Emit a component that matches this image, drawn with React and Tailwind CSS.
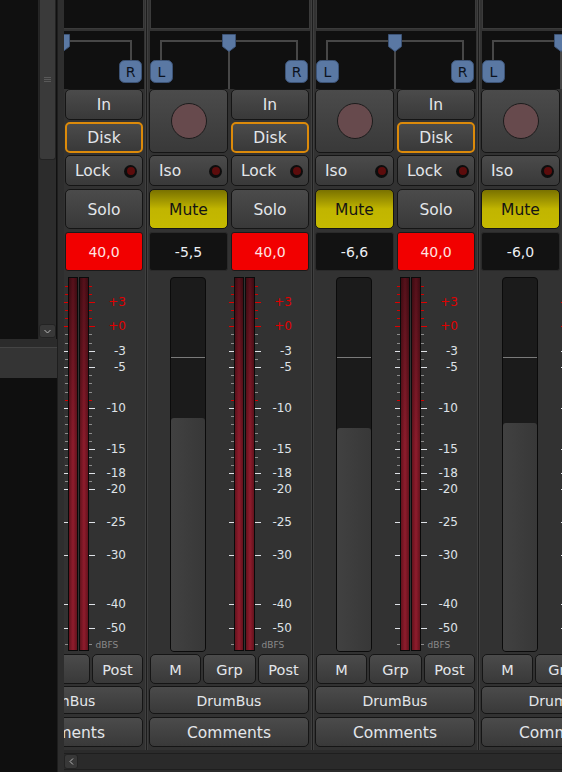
import React from 'react';

// mixer strips; strip 1 is scrolled so only its right half shows
const STRIPS = [
  { gain: '-3,0', fill: 418, grp: '' },
  { gain: '-5,5', fill: 418, grp: 'Grp' },
  { gain: '-6,6', fill: 428, grp: 'Grp' },
  { gain: '-6,0', fill: 423, grp: 'Grp' },
];

const MINOR = [286, 294, 310, 318, 334, 343, 359, 375, 383, 392, 400, 416, 424, 433, 441, 457, 465, 481, 644];
const RED_MINOR = [286, 294, 310, 318, 400];
const LABELS = [
  [302, '+3', true], [326, '+0', true], [351, '-3'], [367, '-5'], [408, '-10'], [449, '-15'],
  [473, '-18'], [489, '-20'], [522, '-25'], [555, '-30'], [604, '-40'], [628, '-50'],
];

const Btn = ({ children, className = '' }) => (
  <div className={`flex items-center justify-center rounded-[5px] border border-[#151515] bg-linear-to-b from-[#4b4b4b] to-[#393939] pt-[3px] text-[#e3e6ea] ${className}`}>
    {children}
  </div>
);

const Led = () => (
  <div className="-mt-[2px] flex h-[13px] w-[13px] items-center justify-center rounded-full bg-[#0d0d0d]">
    <div className="h-[8px] w-[8px] rounded-full bg-[#5c0c0c]" />
  </div>
);

const Panner = () => (
  <svg width="160" height="58" className="block">
    <rect width="160" height="58" fill="#101010" />
    <path d="M11 30 V10 H147 V30" stroke="#474747" strokeWidth="2" fill="none" />
    <path d="M79 18 V58" stroke="#474747" strokeWidth="2" />
    <path d="M72.5 3.5 H85.5 V15.5 L79 20.5 L72.5 15.5 Z" fill="#5a78a3" stroke="#3c5376" />
    <rect x="0.5" y="29.5" width="22" height="22" rx="5" fill="#5a78a3" stroke="#3c5376" />
    <text x="11.5" y="41" textAnchor="middle" dominantBaseline="central" fontSize="14" fill="#0c1320" fontFamily="DejaVu Sans, sans-serif">L</text>
    <rect x="135.5" y="29.5" width="22" height="22" rx="5" fill="#5a78a3" stroke="#3c5376" />
    <text x="146.5" y="41" textAnchor="middle" dominantBaseline="central" fontSize="14" fill="#0c1320" fontFamily="DejaVu Sans, sans-serif">R</text>
  </svg>
);

const Meter = () => {
  const y = (v) => v - 277 + 0.5;
  return (
    <svg width="72" height="375" className="block shrink-0">
      <defs>
        <linearGradient id="mh" x1="0" x2="1" y1="0" y2="0">
          <stop offset="0" stopColor="#5e111a" />
          <stop offset="0.5" stopColor="#8f1c2d" />
          <stop offset="1" stopColor="#5e111a" />
        </linearGradient>
        <linearGradient id="mv" x1="0" x2="0" y1="0" y2="1">
          <stop offset="0" stopColor="#000" stopOpacity="0.4" />
          <stop offset="0.45" stopColor="#000" stopOpacity="0" />
        </linearGradient>
      </defs>
      {[6.5, 17.5].map((x) => (
        <g key={x}>
          <rect x={x} y="0.5" width="9" height="373" fill="url(#mh)" stroke="#0a0a0a" />
          <rect x={x + 0.5} y="1" width="8" height="372" fill="url(#mv)" />
        </g>
      ))}
      {MINOR.map((v) => {
        const c = RED_MINOR.includes(v) ? '#d40000' : '#8c8c8c';
        return (
          <g key={v} stroke={c}>
            <path d={`M3 ${y(v)} H6`} />
            <path d={`M27 ${y(v)} H30`} />
          </g>
        );
      })}
      {LABELS.map(([v, t, red]) => {
        const c = red ? '#e00000' : '#dfe2e7';
        return (
          <g key={v}>
            <path d={`M1 ${y(v)} H6`} stroke={c} />
            <path d={`M27 ${y(v)} H33`} stroke={c} />
            <text x="64" y={v - 277} textAnchor="end" dominantBaseline="central" fontSize="12" fill={c} fontFamily="DejaVu Sans, sans-serif">{t}</text>
          </g>
        );
      })}
      <text x="33.5" y="368" dominantBaseline="central" fontSize="9" fill="#8a8a8a" fontFamily="DejaVu Sans, sans-serif">dBFS</text>
    </svg>
  );
};

const Fader = ({ fill }) => (
  <div className="flex h-[375px] w-[36px] shrink-0 flex-col overflow-hidden rounded-[4px] border border-[#0b0b0b] bg-[#1b1b1b]">
    <div className="h-[79px] shrink-0" />
    <div className="h-px shrink-0 bg-[#7a7a7a]" />
    <div className="flex-1" />
    <div className="shrink-0 rounded-t-[3px] bg-linear-to-r from-[#414141] to-[#383838]" style={{ height: 651 - fill }} />
  </div>
);

const Strip = ({ gain, fill, grp }) => (
  <div className="flex w-[166px] shrink-0 border-l border-l-[#1d1d1d]">
    <div className="flex h-[750px] w-[165px] flex-col border-x border-[#3f3f3f] bg-[#323232]">
      <div className="ml-[2px] h-[29px] w-[160px] shrink-0 border-x border-b border-[#3b3b3b] bg-[#101010]" />
      <div className="ml-[2px] mt-[2px] shrink-0">
        <Panner />
      </div>

      <div className="grid shrink-0 grid-cols-[79px_78px] gap-x-[3px] pl-[1px] text-[15.5px]">
        <Btn className="row-span-2 h-[64px] pt-0!">
          <div className="h-[36px] w-[36px] rounded-full border border-[#1c1c1c] bg-[#674a4d]" />
        </Btn>
        <Btn className="h-[31px]">In</Btn>
        <div className="mt-[2px] flex h-[31px] items-center justify-center rounded-[5px] border-2 border-[#dc8a0a] bg-linear-to-b from-[#4b4b4b] to-[#393939] pt-[2px] text-[#e3e6ea]">
          Disk
        </div>

        <Btn className="mt-[2px] h-[31px] justify-between! pl-[9px] pr-[5px]">
          <span>Iso</span>
          <Led />
        </Btn>
        <Btn className="mt-[2px] h-[31px] justify-between! pl-[9px] pr-[5px]">
          <span>Lock</span>
          <Led />
        </Btn>

        <div className="mt-[3px] flex h-[40px] items-center justify-center rounded-[5px] border border-[#151515] bg-linear-to-b from-[#7a7200] via-[#c1b500] via-50% to-[#c6ba00] pt-[3px] text-[#141414]">
          Mute
        </div>
        <Btn className="mt-[3px] h-[40px]">Solo</Btn>

        <div className="mt-[3px] flex h-[39px] items-center justify-center rounded-[3px] border border-[#2a2a2a] bg-[#121212] pt-[2px] text-[14px] text-[#eceef2]">
          {gain}
        </div>
        <div className="mt-[3px] flex h-[39px] items-center justify-center rounded-[3px] border border-[#1a1a1a] bg-[#f20000] pt-[2px] text-[14px] text-[#ffe2e2]">
          40,0
        </div>
      </div>

      <div className="mt-[6px] flex shrink-0 items-start">
        <div className="w-[22px] shrink-0" />
        <Fader fill={fill} />
        <div className="w-[22px] shrink-0" />
        <Meter />
      </div>

      <div className="mt-[2px] flex shrink-0 gap-[2px] pl-[2px] text-[14.5px]">
        <Btn className="h-[30px] w-[51px]">M</Btn>
        <Btn className="h-[30px] w-[53px]">{grp}</Btn>
        <Btn className="h-[30px] w-[51px]">Post</Btn>
      </div>
      <Btn className="ml-[1px] mt-[2px] h-[28px] w-[160px] shrink-0 text-[14px]">DrumBus</Btn>
      <Btn className="ml-[1px] mt-[3px] h-[30px] w-[160px] shrink-0 text-[15.5px]">Comments</Btn>
    </div>
  </div>
);

const LeftPanel = () => (
  <div className="flex w-[57px] shrink-0 flex-col bg-[#101010]">
    <div className="flex h-[339px] shrink-0">
      <div className="w-[39px] shrink-0 border-r border-[#262626] bg-[#101010]" />
      <div className="flex w-[17px] shrink-0 flex-col bg-[#2c2c2c]">
        <div className="flex h-[160px] shrink-0 items-center justify-center rounded-b-[3px] border-x border-b border-[#232323] bg-[#3a3a3a]">
          <svg width="7" height="7" className="block">
            <path d="M0 1.5 H7 M0 3.5 H7 M0 5.5 H7" stroke="#595959" />
          </svg>
        </div>
        <div className="flex-1" />
        <div className="mb-px flex h-[14px] shrink-0 items-center justify-center rounded-[3px] border border-[#232323] bg-[#383838]">
          <svg width="7" height="5" className="block">
            <path d="M0.5 1 L3.5 4 L6.5 1" stroke="#b5b5b5" fill="none" />
          </svg>
        </div>
      </div>
    </div>
    <div className="h-[8px] shrink-0 bg-[#2b2b2b]" />
    <div className="h-[31px] shrink-0 border-t border-[#444] bg-[#343434]" />
    <div className="flex-1 bg-[#0f0f0f]" />
  </div>
);

export default function App() {
  return (
    <div className="flex h-[772px] w-[562px] overflow-hidden bg-[#2b2b2b] font-['DejaVu_Sans',sans-serif]">
      <LeftPanel />
      <div className="w-[7px] shrink-0 border-l border-[#1e1e1e] bg-[#2e2e2e]" />
      <div className="flex min-w-0 flex-1 flex-col">
        <div className="h-[750px] shrink-0 overflow-hidden">
          <div className="ml-[-84px] flex">
            {STRIPS.map((s, i) => (
              <Strip key={i} gain={s.gain} fill={s.fill} grp={s.grp} />
            ))}
          </div>
        </div>
        <div className="mt-[3px] flex h-[17px] shrink-0 border-y border-[#1e1e1e] bg-[#2a2a2a]">
          <div className="flex w-[14px] shrink-0 items-center justify-center rounded-[3px] border border-[#232323] bg-[#383838]">
            <svg width="5" height="7" className="block">
              <path d="M4 0.5 L1 3.5 L4 6.5" stroke="#b5b5b5" fill="none" />
            </svg>
          </div>
        </div>
      </div>
    </div>
  );
}
